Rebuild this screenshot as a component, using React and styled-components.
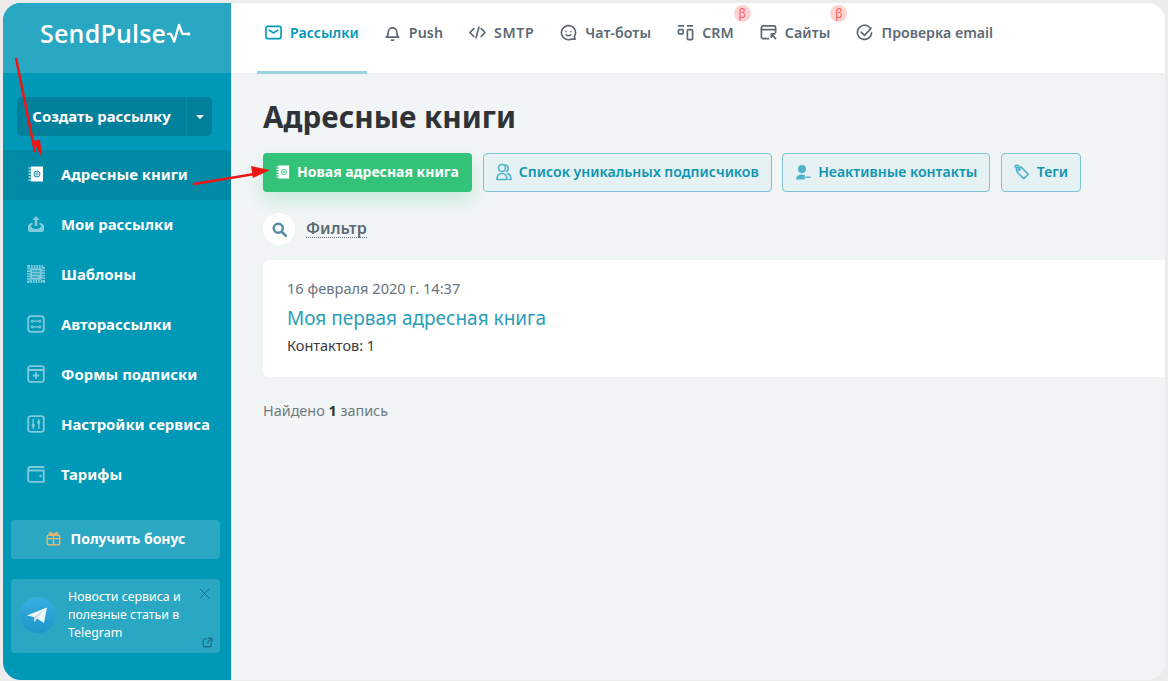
import React from "react";
import styled, { createGlobalStyle } from "styled-components";

const Global = createGlobalStyle`
  html, body { margin: 0; padding: 0; background: #fff; }
  body { font-family: "Noto Sans", "Open Sans", sans-serif; }
  * { box-sizing: border-box; }
`;

const Frame = styled.div`
  position: relative;
  width: 1168px;
  height: 681px;
  background: #ececec;
  padding: 3px 3px 1px 3px;
`;
const Window = styled.div`
  display: flex;
  width: 100%;
  height: 100%;
  border-radius: 18px;
  overflow: hidden;
  background: #f1f5f6;
`;
const Sidebar = styled.aside`
  width: 228px;
  flex: none;
  display: flex;
  flex-direction: column;
  background: #0098b7;
`;
const LogoBar = styled.div`
  height: 70px;
  background: #2aa7c3;
  display: flex;
  align-items: center;
  padding: 0 0 10px 37px;
  gap: 1px;
  color: #fff;
`;
const LogoText = styled.span`
  font-family: "Open Sans", sans-serif;
  font-size: 25px;
  font-weight: 600;
  letter-spacing: 0.2px;
`;
const CreateGroup = styled.div`
  display: flex;
  height: 39px;
  margin: 24px 19px 14px 14px;
  border-radius: 5px;
  background: #00809b;
  color: #fff;
  font-size: 14.9px;
  font-weight: 700;
`;
const CreateMain = styled.div`
  flex: 1;
  display: flex;
  align-items: center;
  justify-content: center;
  padding-bottom: 2px;
`;
const CreateCaret = styled.div`
  width: 26px;
  border-left: 1px solid #0a8ca8;
  display: flex;
  align-items: center;
  justify-content: center;
  &::after {
    content: "";
    border-left: 4px solid transparent;
    border-right: 4px solid transparent;
    border-top: 4px solid #fff;
  }
`;
const NavList = styled.nav`
  display: flex;
  flex-direction: column;
`;
const NavItem = styled.div`
  height: 50px;
  display: flex;
  align-items: center;
  padding: 0 0 2px 24px;
  gap: 16px;
  color: #fff;
  font-size: 14.9px;
  font-weight: 700;
  background: ${(p) => (p.$active ? "#008aa6" : "transparent")};
  svg { flex: none; color: ${(p) => (p.$active ? "#fff" : "#7fcbdb")}; }
`;
const NavIconSlot = styled.span`
  width: 18px;
  display: flex;
  justify-content: center;
`;
const BonusButton = styled.div`
  height: 39px;
  margin: 20px 11px 20px 8px;
  padding-bottom: 2px;
  border-radius: 4px;
  background: #2aa7c3;
  color: #fff;
  font-size: 14px;
  font-weight: 700;
  display: flex;
  align-items: center;
  justify-content: center;
  gap: 10px;
`;
const TelegramCard = styled.div`
  position: relative;
  height: 74px;
  margin: 0 11px 0 8px;
  border-radius: 4px;
  background: #2aa7c3;
  display: flex;
  align-items: center;
  padding: 0 0 2px 9px;
  gap: 12px;
  color: #fff;
  font-size: 12.4px;
  line-height: 18px;
`;
const CardClose = styled.span`
  position: absolute;
  top: 9px;
  right: 10px;
  display: flex;
  color: #1d6f86;
`;
const CardExternal = styled.span`
  position: absolute;
  bottom: 5px;
  right: 7px;
  display: flex;
  color: #1d6f86;
`;
const Main = styled.main`
  flex: 1;
  min-width: 0;
  display: flex;
  flex-direction: column;
`;
const TopBar = styled.header`
  height: 70px;
  flex: none;
  background: #fff;
  display: flex;
  align-items: stretch;
  padding-left: 26px;
  box-shadow: 0 1px 3px rgba(0,0,0,.04);
`;
const Tab = styled.div`
  position: relative;
  display: flex;
  align-items: center;
  gap: 8px;
  padding: 0 ${(p) => (p.$active ? 8 : 13)}px 10px ${(p) => (p.$active ? 8 : 13)}px;
  margin-right: ${(p) => (p.$active ? 4 : 0)}px;
  height: 71px;
  font-size: 14.2px;
  letter-spacing: ${(p) => p.$ls ?? (p.$active ? 0 : 0.1)}px;
  font-weight: 600;
  color: ${(p) => (p.$active ? "#0098b7" : "#5d6a73")};
  border-bottom: 3px solid ${(p) => (p.$active ? "#97d5e2" : "transparent")};
  svg { flex: none; }
`;
const Beta = styled.span`
  position: absolute;
  top: 2px;
  right: -4px;
  width: 17px;
  height: 17px;
  border-radius: 50%;
  background: #ffd2d2;
  color: #f3605f;
  font-size: 12px;
  font-weight: 400;
  display: flex;
  align-items: center;
  justify-content: center;
`;
const Content = styled.div`
  flex: 1;
  padding: 20px 0 0 32px;
`;
const Title = styled.h1`
  margin: 0;
  height: 48px;
  font-size: 29.700px;
  line-height: 48px;
  font-weight: 700;
  color: #2f3338;
`;
const Actions = styled.div`
  display: flex;
  gap: 11px;
  margin-top: 12px;
`;
const PrimaryButton = styled.div`
  height: 39px;
  padding: 0 13px 2px;
  border-radius: 4px;
  background: #33c27a;
  color: #fff;
  font-size: 14px;
  font-weight: 700;
  display: flex;
  align-items: center;
  gap: 7px;
  box-shadow: 0 8px 18px rgba(51,194,122,.22);
`;
const OutlineButton = styled.div`
  height: 39px;
  padding: 0 12px 2px;
  margin-right: -0.500px;
  border-radius: 4px;
  border: 1px solid #7cc3d3;
  background: #e5f1f3;
  color: #0f94b1;
  font-size: 14.100px;
  font-weight: 600;
  display: flex;
  align-items: center;
  gap: 7px;
`;
const FilterRow = styled.div`
  display: flex;
  align-items: center;
  gap: 11px;
  margin-top: 21px;
`;
const FilterIcon = styled.div`
  width: 32px;
  height: 32px;
  border-radius: 50%;
  background: #fff;
  display: flex;
  align-items: center;
  justify-content: center;
`;
const FilterLabel = styled.span`
  font-size: 16.200px;
  font-weight: 600;
  color: #5d6a73;
  line-height: 17px;
  border-bottom: 1px dotted #5d6a73;
`;
const BookCard = styled.div`
  margin-top: 15px;
  height: 117px;
  padding: 18px 24px;
  background: #fff;
  border-radius: 6px 0 0 6px;
`;
const BookDate = styled.div`
  font-size: 14.600px;
  line-height: 20px;
  color: #67757e;
`;
const BookName = styled.div`
  margin-top: 7px;
  font-size: 19px;
  line-height: 26px;
  color: #2a9db8;
`;
const BookCount = styled.div`
  margin-top: 5px;
  font-size: 14.500px;
  line-height: 18px;
  color: #3a3a3a;
`;
const Found = styled.div`
  margin-top: 25px;
  font-size: 14.400px;
  line-height: 18px;
  color: #6f7a82;
  b { color: #2f3338; }
`;
const ArrowLayer = styled.svg`
  position: absolute;
  inset: 0;
  pointer-events: none;
`;

const Ic = ({ s = 18, children, sw = 1.8, ...r }) => (
  <svg width={s} height={s} viewBox="0 0 18 18" fill="none" stroke="currentColor" strokeWidth={sw} strokeLinecap="round" strokeLinejoin="round" {...r}>{children}</svg>
);
const BookIcon = ({ s = 16, ink = "#0a8ba6" }) => (
  <svg width={s} height={s} viewBox="0 0 16 16">
    <rect x="3" y="0.500" width="12" height="15" fill="currentColor" />
    <path d="M0.500 2h3M0.500 5h3M0.500 8h3M0.500 11h3M0.500 14h3" stroke="currentColor" strokeWidth="1.200" />
    <circle cx="9" cy="8" r="3" fill="none" stroke={ink} strokeWidth="1" />
    <circle cx="9" cy="8" r="1.100" fill="none" stroke={ink} strokeWidth="0.800" />
  </svg>
);
const SendIcon = () => (
  <svg width="18" height="18" viewBox="0 0 18 18" fill="currentColor">
    <path d="M1 11c0-1.500 2-3 4.500-3.500v2c-1 .3-1.500.8-1.500 1.500 0 1.500 2 3 5 3s5-1.500 5-3c0-.7-.5-1.200-1.500-1.500v-2C15 8 17 9.500 17 11v4c0 1.200-1 2-2 2H3c-1 0-2-.8-2-2z" />
    <path d="M9 1l3.600 4h-2.300v6H7.700V5H5.400z" />
  </svg>
);
const TemplateIcon = () => (
  <svg width="18" height="18" viewBox="0 0 18 18" fill="none" stroke="currentColor">
    <rect x="1.500" y="1.500" width="15" height="15" strokeWidth="3" strokeDasharray="1.600 1" />
    <rect x="3.200" y="3.200" width="11.600" height="11.600" fill="currentColor" stroke="none" />
    <path d="M5 6h8M5 9h8M5 12h6" stroke="#0098b7" strokeWidth="1.100" />
  </svg>
);
const AutoIcon = () => (
  <Ic>
    <rect x="1.200" y="1.200" width="15.600" height="15.600" rx="2.500" />
    <path d="M6.500 6.200h5M6.500 11.800h5" strokeWidth="1.200" />
    <circle cx="5.300" cy="6.200" r="1" strokeWidth="1.100" /><circle cx="12.700" cy="6.200" r="1" strokeWidth="1.100" />
    <circle cx="5.300" cy="11.800" r="1" strokeWidth="1.100" /><circle cx="12.700" cy="11.800" r="1" strokeWidth="1.100" />
  </Ic>
);
const FormIcon = () => (
  <Ic>
    <rect x="1.200" y="1.200" width="15.600" height="15.600" rx="2" />
    <path d="M1.500 5h15" />
    <path d="M9 8v5M6.500 10.500h5" />
  </Ic>
);
const SlidersIcon = () => (
  <Ic>
    <rect x="1.200" y="1.200" width="15.600" height="15.600" rx="2.500" />
    <path d="M6.200 4.500v9M11.800 4.500v9" strokeWidth="1.400" />
    <rect x="4.800" y="9" width="2.800" height="2.800" fill="currentColor" stroke="none" />
    <rect x="10.400" y="6" width="2.800" height="2.800" fill="currentColor" stroke="none" />
  </Ic>
);
const WalletIcon = () => (
  <Ic>
    <path d="M16.500 2H3a1.800 1.800 0 0 0-1.800 1.800V15A1.800 1.800 0 0 0 3 16.800h13.800V5.500H1.500" />
    <rect x="12.500" y="10" width="2.200" height="2.200" fill="currentColor" stroke="none" />
  </Ic>
);
const GiftIcon = () => (
  <Ic s={15} sw={1.500} style={{ color: "#ffb45e" }}>
    <rect x="1.500" y="5" width="15" height="11.500" rx="1.500" />
    <path d="M1.500 9h15M9 5v11.500" />
    <path d="M9 5C7 1 3.500 1 4 3.500 4.300 5 7 5 9 5zM9 5c2-4 5.500-4 5-1.500C13.700 5 11 5 9 5z" />
  </Ic>
);
const TelegramIcon = () => (
  <svg width="36" height="36" viewBox="0 0 36 36">
    <defs>
      <linearGradient id="tg" x1="0.500" y1="0" x2="0.500" y2="1">
        <stop offset="0" stopColor="#37aee2" />
        <stop offset="1" stopColor="#1e96c8" />
      </linearGradient>
    </defs>
    <circle cx="18" cy="18" r="18" fill="url(#tg)" />
    <path d="M7 18.500 27 10.500 24 26 17 21.500 14.500 25 14 20z" fill="#f1f8fc" />
    <path d="M14 20 24 13 17 21.500 14.500 25z" fill="#c8daea" />
  </svg>
);
const PulseIcon = () => (
  <svg width="25" height="26" viewBox="0 0 26 26" fill="none" stroke="#fff" strokeWidth="2.400" strokeLinecap="round" strokeLinejoin="round">
    <path d="M1 14h3l3.500 8L12.500 4.500 16 14h5" />
    <circle cx="22.500" cy="14" r="1.800" fill="#fff" stroke="none" />
  </svg>
);

const nav = [
  ["Мои рассылки", <SendIcon />],
  ["Шаблоны", <TemplateIcon />],
  ["Авторассылки", <AutoIcon />],
  ["Формы подписки", <FormIcon />],
  ["Настройки сервиса", <SlidersIcon />],
  ["Тарифы", <WalletIcon />],
];

const tabIcons = {
  mail: (
    <Ic sw={1.700} s={17}>
      <rect x="1" y="2.500" width="16" height="13" rx="2" />
      <path d="M4.500 6.500 9 9.500l4.500-3" />
    </Ic>
  ),
  bell: (
    <Ic s={17} sw={1.800}>
      <path d="M2.500 14c1.500-1 2-2.500 2-5.500a4.500 4.500 0 0 1 9 0c0 3 .5 4.500 2 5.500z" />
      <path d="M8 17h2" />
    </Ic>
  ),
  code: (
    <Ic s={17} sw={1.800}>
      <path d="M5 5 1 9l4 4M13 5l4 4-4 4M10.500 3.500l-3 11" />
    </Ic>
  ),
  chat: (
    <Ic s={17} sw={1.800}>
      <path d="M12 16A7.500 7.500 0 1 1 16.500 9c0 1.500-.5 3-1.500 4.200l1 2.800z" />
      <path d="M6.300 8v.2M11.700 8v.2M6.500 11.500c1.500 1 3.500 1 5 0" strokeWidth="1.600" />
    </Ic>
  ),
  crm: (
    <Ic s={17} sw={1.800} strokeLinecap="butt">
      <path d="M1 2h6.500M10.500 2H17" />
      <rect x="1.500" y="6" width="5" height="4.500" rx="1" />
      <rect x="11" y="6" width="5.500" height="10.500" rx="1" />
    </Ic>
  ),
  site: (
    <Ic s={17} sw={1.800}>
      <path d="M9 15.500H3a1.500 1.500 0 0 1-1.500-1.500V3.500A1.500 1.500 0 0 1 3 2h12a1.500 1.500 0 0 1 1.500 1.500V9" />
      <path d="M1.500 6h15" />
      <path d="M12 10.500v3.500M12 10.500h3.500M12 10.500l4.500 5" />
    </Ic>
  ),
  check: (
    <Ic s={17} sw={1.800}>
      <path d="M14.800 4A7.500 7.500 0 1 0 16.500 9.500" />
      <path d="M5.500 8.500 9 12l7-7.500" />
    </Ic>
  ),
};

const TealPeople = () => (
  <svg width="16" height="18" viewBox="0 0 16 18" fill="none" stroke="#4fb3ca" strokeWidth="1.600" strokeLinecap="round" strokeLinejoin="round">
    <circle cx="6" cy="5" r="3.500" />
    <path d="M9 2a3.500 3.500 0 0 1 1.500 6.500" />
    <path d="M1 16.500c0-3.500 1.500-6 5-6s5 2.500 5 6z" />
    <path d="M11.500 10.500c2 .5 3.500 2.500 3.500 6h-2" />
  </svg>
);
const TealUser = () => (
  <svg width="16" height="16" viewBox="0 0 16 16" fill="#4fb3ca">
    <circle cx="7" cy="5" r="4" />
    <path d="M1 15.500c0-3.500 2.500-5 6-5 1 0 2 .2 2.800.5v4.500z" />
    <rect x="10.500" y="12.500" width="5" height="1.500" />
  </svg>
);
const TealTag = () => (
  <svg width="16" height="16" viewBox="0 0 18 18" fill="none" stroke="#4fb3ca" strokeWidth="1.800" strokeLinejoin="round" strokeLinecap="round">
    <path d="M2.500 4 8 3.500l8 8-5 5-7.500-7.500z" />
    <path d="M1 3.500C1 2 3 1 5 2" />
    <circle cx="5.800" cy="6.200" r="1" />
  </svg>
);

export default function App() {
  return (
    <>
      <Global />
      <Frame>
        <Window>
          <Sidebar>
            <LogoBar>
              <LogoText>SendPulse</LogoText>
              <PulseIcon />
            </LogoBar>
            <CreateGroup>
              <CreateMain>Создать рассылку</CreateMain>
              <CreateCaret />
            </CreateGroup>
            <NavList>
              <NavItem $active>
                <NavIconSlot><BookIcon /></NavIconSlot>
                <span>Адресные книги</span>
              </NavItem>
              {nav.map(([t, i]) => (
                <NavItem key={t}>
                  <NavIconSlot>{i}</NavIconSlot>
                  <span>{t}</span>
                </NavItem>
              ))}
            </NavList>
            <BonusButton>
              <GiftIcon />
              Получить бонус
            </BonusButton>
            <TelegramCard>
              <TelegramIcon />
              <div>Новости сервиса и<br />полезные статьи в<br />Telegram</div>
              <CardClose>
                <Ic s={11} sw={1.600}><path d="M2 2l14 14M16 2 2 16" /></Ic>
              </CardClose>
              <CardExternal>
                <Ic s={11} sw={2.200}><path d="M8 3H4a2 2 0 0 0-2 2v9a2 2 0 0 0 2 2h9a2 2 0 0 0 2-2v-4M9 9l7-7M11 2h5v5" /></Ic>
              </CardExternal>
            </TelegramCard>
          </Sidebar>
          <Main>
            <TopBar>
              <Tab $active>{tabIcons.mail}Рассылки</Tab>
              <Tab>{tabIcons.bell}Push</Tab>
              <Tab $ls={0.6}>{tabIcons.code}SMTP</Tab>
              <Tab>{tabIcons.chat}Чат-боты</Tab>
              <Tab>{tabIcons.crm}CRM<Beta>β</Beta></Tab>
              <Tab>{tabIcons.site}Сайты<Beta>β</Beta></Tab>
              <Tab $ls={0}>{tabIcons.check}Проверка email</Tab>
            </TopBar>
            <Content>
              <Title>Адресные книги</Title>
              <Actions>
                <PrimaryButton><BookIcon s={14} ink="#33c27a" />Новая адресная книга</PrimaryButton>
                <OutlineButton><TealPeople />Список уникальных подписчиков</OutlineButton>
                <OutlineButton><TealUser />Неактивные контакты</OutlineButton>
                <OutlineButton><TealTag />Теги</OutlineButton>
              </Actions>
              <FilterRow>
                <FilterIcon>
                  <Ic s={15} sw={3} style={{ color: "#5a8aa3" }}><circle cx="7.500" cy="7.500" r="5.500" /><path d="M12 12l4.500 4.500" /></Ic>
                </FilterIcon>
                <FilterLabel>Фильтр</FilterLabel>
              </FilterRow>
              <BookCard>
                <BookDate>16 февраля 2020 г. 14:37</BookDate>
                <BookName>Моя первая адресная книга</BookName>
                <BookCount>Контактов: 1</BookCount>
              </BookCard>
              <Found>Найдено <b>1</b> запись</Found>
            </Content>
          </Main>
        </Window>
        <ArrowLayer width="1168" height="681" viewBox="0 0 1168 681">
          <path d="M16 58 L35 152" stroke="#f01414" strokeWidth="2.500" />
          <path d="M42 158 L33 141 L40 139.500 z" fill="#f01414" />
          <path d="M194 184 L260 173" stroke="#f01414" strokeWidth="2.500" strokeLinecap="round" />
          <path d="M270 170 L251 166 L253 178 z" fill="#f01414" />
        </ArrowLayer>
      </Frame>
    </>
  );
}
